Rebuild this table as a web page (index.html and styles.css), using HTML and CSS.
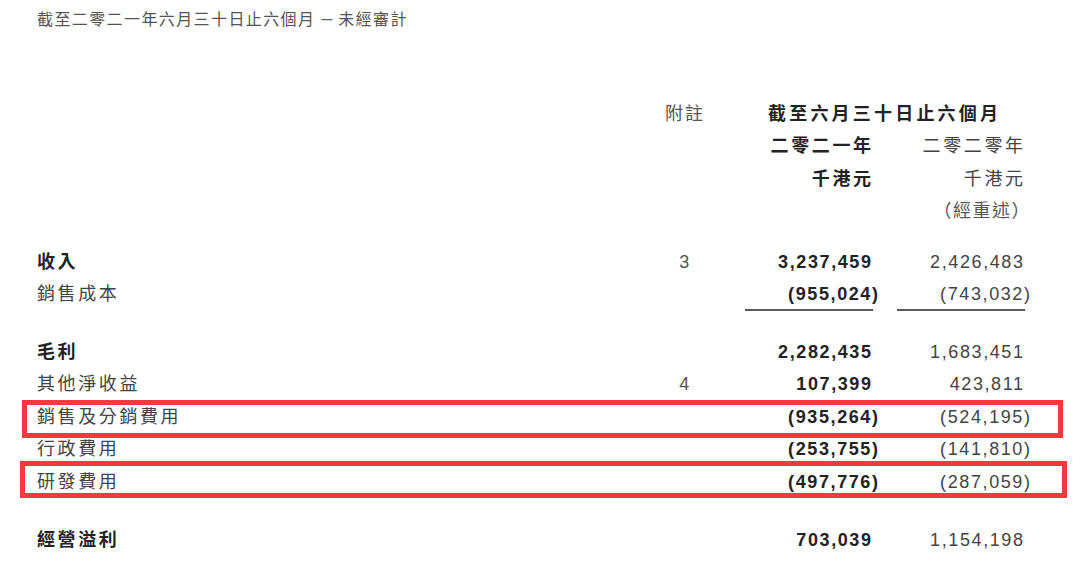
FILE: index.html
```html
<!DOCTYPE html>
<html lang="zh-Hant">
<head>
<meta charset="utf-8">
<link rel="stylesheet" href="styles.css">
</head>
<body>
<div class="page">
  <div class="title">截至二零二一年六月三十日止六個月 <span class="dash">–</span> 未經審計</div>

  <div class="head">
    <div class="row">
      <div class="label"></div>
      <div class="note">附註</div>
      <div class="period b">截至六月三十日止六個月</div>
    </div>
    <div class="row">
      <div class="label"></div>
      <div class="note"></div>
      <div class="c1 b">二零二一年</div>
      <div class="c2">二零二零年</div>
    </div>
    <div class="row">
      <div class="label"></div>
      <div class="note"></div>
      <div class="c1 b">千港元</div>
      <div class="c2">千港元</div>
    </div>
    <div class="row">
      <div class="label"></div>
      <div class="note"></div>
      <div class="c1"></div>
      <div class="c2 restated">（經重述）</div>
    </div>
  </div>

  <div class="group g1">
    <div class="row">
      <div class="label b">收入</div>
      <div class="note num">3</div>
      <div class="c1 num b">3,237,459</div>
      <div class="c2 num">2,426,483</div>
    </div>
    <div class="row">
      <div class="label">銷售成本</div>
      <div class="note num"></div>
      <div class="c1 num b"><span class="ul">(955,024<span class="cp">)</span></span></div>
      <div class="c2 num"><span class="ul">(743,032<span class="cp">)</span></span></div>
    </div>
  </div>

  <div class="group g2">
    <div class="row">
      <div class="label b">毛利</div>
      <div class="note num"></div>
      <div class="c1 num b">2,282,435</div>
      <div class="c2 num">1,683,451</div>
    </div>
    <div class="row">
      <div class="label">其他淨收益</div>
      <div class="note num">4</div>
      <div class="c1 num b">107,399</div>
      <div class="c2 num">423,811</div>
    </div>
    <div class="row mark mark-a">
      <div class="label">銷售及分銷費用</div>
      <div class="note num"></div>
      <div class="c1 num b">(935,264<span class="cp">)</span></div>
      <div class="c2 num">(524,195<span class="cp">)</span></div>
    </div>
    <div class="row">
      <div class="label">行政費用</div>
      <div class="note num"></div>
      <div class="c1 num b">(253,755<span class="cp">)</span></div>
      <div class="c2 num">(141,810<span class="cp">)</span></div>
    </div>
    <div class="row mark mark-b">
      <div class="label">研發費用</div>
      <div class="note num"></div>
      <div class="c1 num b">(497,776<span class="cp">)</span></div>
      <div class="c2 num">(287,059<span class="cp">)</span></div>
    </div>
  </div>

  <div class="group g3">
    <div class="row">
      <div class="label b">經營溢利</div>
      <div class="note num"></div>
      <div class="c1 num b">703,039</div>
      <div class="c2 num">1,154,198</div>
    </div>
  </div>
</div>
</body>
</html>
```

FILE: styles.css
```css
html, body {
  margin: 0;
  padding: 0;
  background: #ffffff;
}

body {
  font-family: "Liberation Sans", "Noto Sans CJK TC", sans-serif;
  color: #444444;
  width: 1080px;
  height: 572px;
  overflow: hidden;
}

.page {
  padding-left: 37px;
}

.title {
  height: 36px;
  line-height: 36px;
  font-size: 16px;
  letter-spacing: 1.4px;
  color: #555555;
  white-space: nowrap;
}

.dash {
  font-family: "Liberation Sans", sans-serif;
  font-size: 20px;
  letter-spacing: 0;
  color: #666666;
}

.head {
  margin-top: 61.75px;
}

.row {
  display: grid;
  grid-template-columns: 603px 90px 141px 152px;
  height: 32.5px;
  line-height: 32.5px;
  font-size: 18px;
  letter-spacing: 2.6px;
  position: relative;
}

.label {
  white-space: nowrap;
}

.note {
  text-align: center;
  color: #555555;
  letter-spacing: 2px;
}

.period {
  grid-column: 3 / 5;
  text-align: left;
  padding-left: 38px;
  letter-spacing: 3.2px;
  color: #222222;
}

.c1, .c2 {
  text-align: right;
  white-space: nowrap;
  margin-right: -2.6px;
}

.c2 {
  color: #444444;
}

.restated {
  color: #555555;
  letter-spacing: 1.5px;
  margin-right: -8px;
}

.b {
  font-weight: 700;
  color: #222222;
}

.num {
  letter-spacing: 1.6px;
}

.num.c1, .num.c2 {
  margin-right: -1.6px;
}

.cp {
  margin-right: -7px;
}

.ul {
  display: inline-block;
  width: 128px;
  height: 32.5px;
  box-sizing: border-box;
  border-bottom: 2px solid #5a5a5a;
  text-align: right;
  vertical-align: top;
}

.g1 {
  margin-top: 18px;
}

.g2 {
  margin-top: 25px;
}

.g3 {
  margin-top: 25.5px;
}

.mark::after {
  content: "";
  position: absolute;
  border: 5px solid #f53a3f;
  box-sizing: border-box;
  pointer-events: none;
}

.mark-a::after {
  left: -15px;
  top: -1px;
  width: 1041px;
  height: 38px;
}

.mark-b::after {
  left: -17px;
  top: -5px;
  width: 1047px;
  height: 37px;
}
```
